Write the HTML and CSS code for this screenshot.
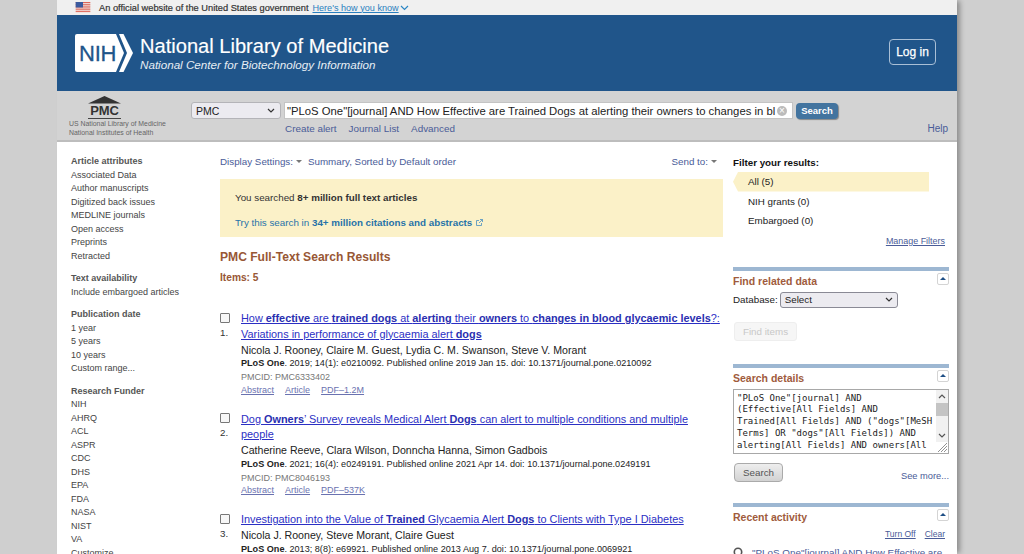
FILE: index.html
```html
<!DOCTYPE html>
<html lang="en">
<head>
<meta charset="utf-8">
<title>PMC Search Results</title>
<link rel="stylesheet" href="styles.css">
</head>
<body>
<div class="page">
  <div class="gov">
    <svg class="flag" width="16" height="12" viewBox="0 0 16 12"><rect width="16" height="12" fill="#f4f4f4"/><path d="M0 .5h16M0 2.500h16M0 4.500h16M0 6.500h16M0 8.500h16M0 10.500h16" stroke="#d9503f" stroke-width="1"/><rect width="8" height="6" fill="#3b5a9e"/></svg>
    <span class="gov-text">An official website of the United States government</span>
    <a class="gov-link">Here's how you know</a>
    <svg class="gov-chev" width="9" height="6" viewBox="0 0 9 6"><path d="M1 1l3.500 3.500L8 1" fill="none" stroke="#2a86c4" stroke-width="1.200"/></svg>
  </div>
  <header class="nlm">
    <svg class="nih" width="59" height="38" viewBox="0 0 59 38"><path d="M2 0h39l8 19-8 19H2a2 2 0 0 1-2-2V2a2 2 0 0 1 2-2z" fill="#fff"/><path d="M44 0h4.500L58 19l-9.500 19H44l8-19z" fill="#fff"/></svg>
    <span class="nih-text">NIH</span>
    <div class="nlm-titles">
      <div class="nlm-title">National Library of Medicine</div>
      <div class="nlm-sub">National Center for Biotechnology Information</div>
    </div>
    <a class="login">Log in</a>
  </header>
  <div class="searchbar">
    <div class="pmc-logo">
      <svg width="33" height="8" viewBox="0 0 33 8" class="pmc-roof"><path d="M16.500 0L33 7.500H0z" fill="#333"/></svg>
      <div class="pmc-word">PMC</div>
      <div class="pmc-l1">US National Library of Medicine</div>
      <div class="pmc-l2">National Institutes of Health</div>
    </div>
    <div class="search-main">
      <div class="search-row">
        <div class="db-select"><span>PMC</span><svg width="8" height="5" viewBox="0 0 8 5"><path d="M1 1l3 3 3-3" fill="none" stroke="#333" stroke-width="1.200"/></svg></div>
        <div class="term"><span class="term-text">"PLoS One"[journal] AND How Effective are Trained Dogs at alerting their owners to changes in bl</span><span class="term-clear">×</span></div>
        <div class="go">Search</div>
      </div>
      <div class="search-links"><a>Create alert</a><a>Journal List</a><a>Advanced</a><a class="help">Help</a></div>
    </div>
  </div>
  <div class="columns">
    <aside class="filters">
      <h4>Article attributes</h4>
      <ul><li>Associated Data</li><li>Author manuscripts</li><li>Digitized back issues</li><li>MEDLINE journals</li><li>Open access</li><li>Preprints</li><li>Retracted</li></ul>
      <h4>Text availability</h4>
      <ul><li>Include embargoed articles</li></ul>
      <h4>Publication date</h4>
      <ul><li>1 year</li><li>5 years</li><li>10 years</li><li>Custom range...</li></ul>
      <h4>Research Funder</h4>
      <ul><li>NIH</li><li>AHRQ</li><li>ACL</li><li>ASPR</li><li>CDC</li><li>DHS</li><li>EPA</li><li>FDA</li><li>NASA</li><li>NIST</li><li>VA</li><li>Customize ...</li></ul>
    </aside>
    <main class="results">
      <div class="display">
        <a>Display Settings:</a><i class="caret"></i><a class="summary">Summary, Sorted by Default order</a>
        <a class="sendto">Send to:</a><i class="caret"></i>
      </div>
      <div class="notice">
        <p class="notice-a">You searched <b>8+ million full text articles</b></p>
        <p class="notice-b">Try this search in <b>34+ million citations and abstracts</b>
          <svg width="7" height="7" viewBox="0 0 7 7"><path d="M3 1.500H.5v5h5V4M3 4l3.500-3.500M4 .5h2.500V3" fill="none" stroke="#4a8fc0" stroke-width=".8"/></svg></p>
      </div>
      <h2>PMC Full-Text Search Results</h2>
      <div class="items">Items: 5</div>

      <article class="res">
        <div class="res-mark"><span class="box"></span><span class="num">1.</span></div>
        <div class="res-body">
          <a class="res-title">How <b>effective</b> are <b>trained dogs</b> at <b>alerting</b> their <b>owners</b> to <b>changes in blood glycaemic levels</b>?: Variations in performance of glycaemia alert <b>dogs</b></a>
          <div class="auth">Nicola J. Rooney, Claire M. Guest, Lydia C. M. Swanson, Steve V. Morant</div>
          <div class="cite"><b>PLoS One</b>. 2019; 14(1): e0210092. Published online 2019 Jan 15. doi: 10.1371/journal.pone.0210092</div>
          <div class="pmcid">PMCID: PMC6333402</div>
          <div class="res-links"><a>Abstract</a><a>Article</a><a>PDF–1.2M</a></div>
        </div>
      </article>
      <article class="res">
        <div class="res-mark"><span class="box"></span><span class="num">2.</span></div>
        <div class="res-body">
          <a class="res-title">Dog <b>Owners</b>’ Survey reveals Medical Alert <b>Dogs</b> can alert to multiple conditions and multiple people</a>
          <div class="auth">Catherine Reeve, Clara Wilson, Donncha Hanna, Simon Gadbois</div>
          <div class="cite"><b>PLoS One</b>. 2021; 16(4): e0249191. Published online 2021 Apr 14. doi: 10.1371/journal.pone.0249191</div>
          <div class="pmcid">PMCID: PMC8046193</div>
          <div class="res-links"><a>Abstract</a><a>Article</a><a>PDF–537K</a></div>
        </div>
      </article>
      <article class="res">
        <div class="res-mark"><span class="box"></span><span class="num">3.</span></div>
        <div class="res-body">
          <a class="res-title">Investigation into the Value of <b>Trained</b> Glycaemia Alert <b>Dogs</b> to Clients with Type I Diabetes</a>
          <div class="auth">Nicola J. Rooney, Steve Morant, Claire Guest</div>
          <div class="cite"><b>PLoS One</b>. 2013; 8(8): e69921. Published online 2013 Aug 7. doi: 10.1371/journal.pone.0069921</div>
        </div>
      </article>
    </main>
    <aside class="side">
      <div class="filter-title">Filter your results:</div>
      <div class="f-item f-on">All (5)</div>
      <div class="f-item">NIH grants (0)</div>
      <div class="f-item">Embargoed (0)</div>
      <div class="manage"><a>Manage Filters</a></div>

      <section class="portlet p-related">
        <div class="p-head"><h3>Find related data</h3><span class="toggle"></span></div>
        <div class="db-row"><span>Database:</span><div class="rel-select"><span>Select</span><svg width="8" height="5" viewBox="0 0 8 5"><path d="M1 1l3 3 3-3" fill="none" stroke="#333" stroke-width="1.200"/></svg></div></div>
        <div class="find-btn">Find items</div>
      </section>

      <section class="portlet p-details">
        <div class="p-head"><h3>Search details</h3><span class="toggle"></span></div>
        <div class="details-box">
          <pre class="details-text">"PLoS One"[journal] AND
(Effective[All Fields] AND
Trained[All Fields] AND ("dogs"[MeSH
Terms] OR "dogs"[All Fields]) AND
alerting[All Fields] AND owners[All</pre>
          <div class="sb"><svg width="8" height="5" viewBox="0 0 8 5"><path d="M1 4l3-3 3 3" fill="none" stroke="#555" stroke-width="1.200"/></svg><span class="sb-thumb"></span><svg class="sb-down" width="8" height="5" viewBox="0 0 8 5"><path d="M1 1l3 3 3-3" fill="none" stroke="#555" stroke-width="1.200"/></svg></div>
          <svg class="grip" width="10" height="10" viewBox="0 0 10 10"><path d="M1 10L10 1M4 10l6-6M7 10l3-3" stroke="#777" stroke-width=".8"/></svg>
        </div>
        <div class="details-foot"><div class="gray-btn">Search</div><a>See more...</a></div>
      </section>

      <section class="portlet p-recent">
        <div class="p-head"><h3>Recent activity</h3><span class="toggle"></span></div>
        <div class="recent-links"><a>Turn Off</a><a>Clear</a></div>
        <div class="recent-item"><svg width="11" height="11" viewBox="0 0 11 11"><circle cx="5" cy="5" r="3.700" fill="none" stroke="#555" stroke-width="1.600"/></svg><a>"PLoS One"[journal] AND How Effective are</a></div>
      </section>
    </aside>
  </div>
</div>
</body>
</html>
```
FILE: styles.css
```css
* { box-sizing: border-box; }
html, body { margin: 0; height: 554px; overflow: hidden; background: #cfcfcf; }
body { font-family: "Liberation Sans", Arial, sans-serif; color: #222; }
a { color: #4a5c98; }
p, h2, h3, h4, ul, pre { margin: 0; padding: 0; }

.page { width: 900px; height: 554px; margin-left: 57px; background: #fff; box-shadow: 4px 0 5px -1px rgba(0,0,0,.32); overflow: hidden; }

.gov { height: 15px; background: #f0f0f0; display: flex; align-items: center; padding-left: 18px; font-size: 9.270px; }
.flag { width: 16px; height: 11px; margin-right: 8px; }
.gov-text { color: #333; margin-right: 4px; -webkit-text-stroke: .2px #333; }
.gov-link { color: #2a7fbf; text-decoration: underline; font-size: 9.100px; }
.gov-chev { margin-left: 1px; }

.nlm { height: 76px; background: #20558a; display: flex; align-items: center; padding: 0 21px 0 18px; position: relative; color: #fff; }
.nih { flex: none; margin-bottom: 1px; }
.nih-text { position: absolute; left: 22px; top: 26px; font-size: 22px; line-height: 25px; color: #20558a; letter-spacing: -.2px; -webkit-text-stroke: .3px #20558a; }
.nlm-titles { margin-left: 6px; }
.nlm-title { font-size: 20.100px; line-height: 22px; color: #fff; -webkit-text-stroke: .15px #fff; }
.nlm-sub { font-size: 11.650px; line-height: 15px; font-style: italic; color: #e6edf4; }
.login { margin-left: auto; width: 47px; height: 26px; border: 1px solid #a9bfd6; border-radius: 4px; color: #fff; font-size: 12px; -webkit-text-stroke: .25px #fff; display: flex; align-items: center; justify-content: center; margin-top: -3px; }

.searchbar { height: 51px; background: #d3d3d3; border-bottom: 2px solid #bdbdbd; display: flex; position: relative; }
.pmc-logo { width: 134px; flex: none; padding: 5px 0 0 12px; color: #666; position: relative; }
.pmc-roof { display: block; margin-left: 19px; }
.pmc-word { width: 33px; margin-left: 19px; font-size: 13px; line-height: 14px; font-weight: 700; color: #333; letter-spacing: -.2px; text-align: center; border-bottom: 1px solid #444; }
.pmc-l1, .pmc-l2 { font-size: 6.900px; line-height: 8.500px; white-space: nowrap; }
.pmc-l1 { margin-top: 1px; }
.search-main { flex: 1; padding-top: 11px; }
.search-row { display: flex; align-items: center; }
.db-select { width: 90px; height: 17px; border: 1px solid #b4b4b8; border-radius: 3px; background: #ecebf0; font-size: 10.500px; color: #222; display: flex; align-items: center; justify-content: space-between; padding: 0 5px 0 4px; }
.term { width: 509px; height: 17px; margin-left: 3px; background: #fff; border: 1px solid #c4c4c4; font-size: 11.300px; color: #222; display: flex; align-items: center; padding: 1px 0 0 2px; position: relative; white-space: nowrap; }
.term-text { flex: none; }
.term-clear { position: absolute; right: 5px; top: 3px; width: 10px; height: 10px; border-radius: 50%; background: #bbb; color: #fff; font-size: 10px; line-height: 10px; text-align: center; }
.go { width: 42px; height: 16px; margin-left: 3px; background: #43749f; border-radius: 4px; color: #fff; font-size: 9.500px; font-weight: 700; display: flex; align-items: center; justify-content: center; box-shadow: 1px 1px 1px #888; }
.search-links { display: flex; padding: 4px 0 0 94px; font-size: 9.900px; line-height: 12px; gap: 12px; }
.help { margin-left: auto; margin-right: 9px; font-size: 10px; }

.columns { display: flex; }
.filters { width: 163px; flex: none; padding: 13px 0 0 14px; font-size: 9px; color: #444; }
.filters h4 { font-size: 9px; line-height: 13.500px; font-weight: 700; color: #555; }
.filters ul { list-style: none; margin-bottom: 9px; }
.filters li { line-height: 13.500px; white-space: nowrap; }

.results { width: 503px; flex: none; }
.display { display: flex; align-items: center; font-size: 9.800px; height: 13px; margin-top: 13px; white-space: nowrap; }
.caret { width: 0; height: 0; border: 3px solid transparent; border-top: 3px solid #777; border-bottom: 0; margin-left: 3px; }
.summary { margin-left: 6px; }
.sendto { margin-left: auto; }
.display .caret:last-child { margin-right: 6px; }
.notice { height: 58px; margin-top: 11px; background: #fbf1c8; padding: 12px 15px 0; font-size: 9.800px; }
.notice-a { color: #333; line-height: 13px; }
.notice-b { color: #2773a8; line-height: 13px; margin-top: 12px; }
.notice-b svg { margin-left: 1px; }
h2 { font-size: 12.100px; line-height: 14px; color: #985735; margin-top: 13px; }
.items { font-size: 10.200px; line-height: 13px; font-weight: 700; color: #985735; margin-top: 7px; margin-bottom: 27px; }

.res { display: flex; margin-bottom: 15px; }
.res-mark { width: 21px; flex: none; display: flex; flex-direction: column; }
.box { width: 10px; height: 10px; margin-top: 1.500px; border: 1px solid #777; border-radius: 1px; background: #f7f7f7; }
.num { font-size: 9.800px; line-height: 13px; margin-top: 3px; color: #333; }
.res-title { display: block; font-size: 10.900px; line-height: 15.500px; color: #2b2fc4; text-decoration: underline; }
.res-title b { font-weight: 700; color: #2a2fb0; }
.auth { font-size: 10.600px; line-height: 14px; margin-top: .5px; color: #222; }
.cite { font-size: 9.100px; line-height: 13px; margin-top: .5px; color: #222; }
.pmcid { font-size: 9px; line-height: 13px; margin-top: 1px; color: #777; }
.res-links { font-size: 9px; line-height: 13px; display: flex; gap: 11px; margin-top: -.5px; }
.res-links a { color: #6a72b0; text-decoration: underline; }

.side { width: 216px; flex: none; margin-left: 10px; font-size: 9.800px; padding-top: 14px; }
.filter-title { font-size: 9.800px; line-height: 13px; font-weight: 700; color: #111; }
.f-item { height: 19.500px; line-height: 19.500px; padding-left: 15px; width: 196px; color: #222; }
.f-on { background: #fbf1c8; clip-path: polygon(0 50%, 5px 0, 100% 0, 100% 100%, 5px 100%); margin-top: 3px; }
.manage { text-align: right; padding-right: 4px; margin-top: 4px; font-size: 8.950px; line-height: 12px; }
.manage a { text-decoration: underline; }

.portlet { border-top: 4px solid #9db7d2; }
.p-head { display: flex; justify-content: space-between; height: 18px; align-items: center; }
.p-head h3 { font-size: 10.500px; font-weight: 700; color: #a05b3c; padding-top: 3px; }
.toggle { width: 12px; height: 12px; border: 1px solid #d4d4d4; border-radius: 2px; position: relative; margin-top: -2px; background: #fff; }
.toggle::after { content: ""; position: absolute; left: 2px; top: 3px; border: 3px solid transparent; border-top: 0; border-bottom: 3px solid #1f4f85; }
.p-related { margin-top: 20px; height: 97px; }
.db-row { display: flex; align-items: center; margin-top: 3px; font-size: 9.800px; color: #222; gap: 2px; }
.rel-select { width: 118px; height: 16px; border: 1px solid #8a8a95; border-radius: 3px; background: #ecebf0; display: flex; align-items: center; justify-content: space-between; padding: 0 4px; font-size: 9.800px; }
.find-btn { width: 63px; height: 19px; margin-top: 14px; margin-left: 1px; background: #f6f6f6; border: 1px solid #eee; border-radius: 3px; color: #c8c8c8; font-size: 9.800px; display: flex; align-items: center; justify-content: center; }

.p-details { height: 139px; }
.details-box { position: relative; width: 216px; height: 65px; border: 1px solid #a8a8a8; margin-top: 3px; background: #fff; padding: 3px 3px; overflow: hidden; }
.details-text { font-family: "DejaVu Sans Mono", "Liberation Mono", monospace; font-size: 9px; line-height: 11.800px; color: #222; white-space: pre; }
.sb { position: absolute; right: 0; top: 0; width: 12px; height: 52px; background: #f1f1f1; display: flex; flex-direction: column; align-items: center; padding-top: 4px; }
.sb-thumb { width: 12px; height: 13px; background: #c4c4c4; margin-top: 4px; }
.sb-down { margin-top: auto; margin-bottom: 4px; }
.grip { position: absolute; right: 1px; bottom: 1px; }
.details-foot { display: flex; justify-content: space-between; align-items: flex-end; margin-top: 9px; }
.details-foot a { font-size: 9.300px; line-height: 12px; }
.gray-btn { width: 49px; height: 19px; margin-left: 1px; border: 1px solid #aaa; border-radius: 4px; background: linear-gradient(#eee,#d2d2d2); color: #555; font-size: 9.800px; display: flex; align-items: center; justify-content: center; }

.recent-links { display: flex; justify-content: flex-end; gap: 9px; font-size: 8.500px; line-height: 12px; margin-top: 3px; padding-right: 4px; }
.recent-links a { text-decoration: underline; }
.recent-item { display: flex; gap: 8px; margin-top: 7px; font-size: 9.850px; line-height: 12px; white-space: nowrap; align-items: center; }
.recent-item a { text-decoration: underline; color: #4a5c98; }
```
